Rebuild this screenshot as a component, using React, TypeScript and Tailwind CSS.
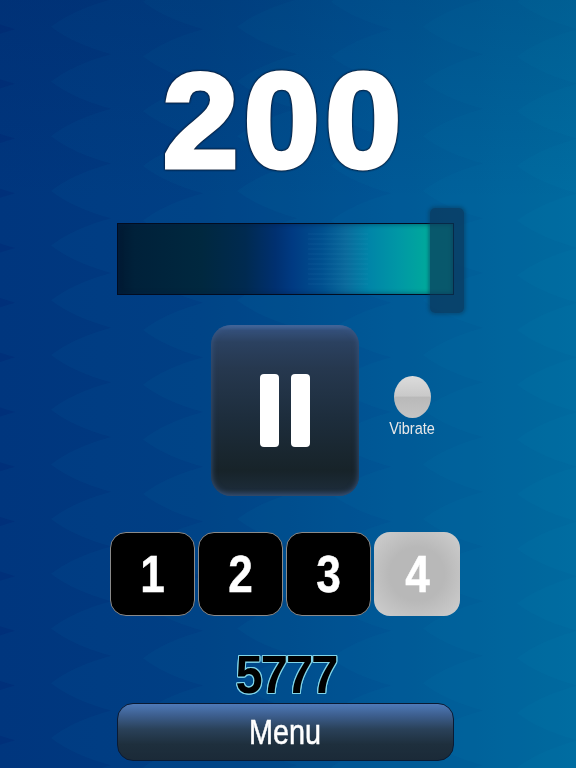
const PERIOD = 54.7;

function boundary(leftX: number, leftY: number) {
  // region to the right of a scalloped zig-zag edge; left tips at (leftX, leftY + k*PERIOD)
  const half = PERIOD / 2;
  const w = 60;
  let y = leftY % PERIOD;
  y -= PERIOD * 2;
  let d = `M700 ${y - half} L${leftX + w} ${y - half}`;
  while (y < 820) {
    d += ` Q${leftX + 22} ${y - 17} ${leftX} ${y}`;
    d += ` Q${leftX + 22} ${y + 17} ${leftX + w} ${y + half}`;
    y += PERIOD;
  }
  d += ` L700 ${y - half} Z`;
  return d;
}

const EDGES: [number, number][] = [
  [-45, 330],
  [51, 355],
  [143, 330],
  [237, 355],
  [331, 330],
  [423, 355],
  [517, 330],
];

export default function App() {
  return (
    <div className="relative w-[576px] h-[768px] overflow-hidden bg-[linear-gradient(90deg,#00307a_0%,#00347c_35%,#004288_65%,#005692_100%)] [font-family:'Liberation_Sans',Arial,sans-serif]">
      <svg className="absolute inset-0" width="576" height="768">
        {EDGES.map(([x, y]) => (
          <path key={x} d={boundary(x, y)} fill="#00a0c8" fillOpacity="0.055" />
        ))}
      </svg>
      <div className="absolute inset-x-0 top-0 h-[200px] bg-[linear-gradient(180deg,rgba(0,25,80,0.16),rgba(0,25,80,0))]" />

      <div className="relative flex flex-col items-center h-full">
        <div className="h-[223px] w-full flex justify-center pt-[65px]">
          <div className="ml-[-7px] text-[140px] leading-[111px] h-[111px] font-bold text-white tracking-[6px] scale-x-[.97] scale-y-[.96] [-webkit-text-stroke:5px_#ffffff] [filter:drop-shadow(0_0_1px_#06152e)_drop-shadow(0_0_0.5px_#06152e)]">
            200
          </div>
        </div>

        <div className="relative ml-[-5px] w-[337px] h-[72px] border-[1.5px] border-[#020c20] bg-[linear-gradient(90deg,#001a33_0%,#00213a_5%,#00283f_25%,#002a50_38%,#003070_47%,#003a82_52%,#00508f_61%,#0a6a9c_68%,#0085a8_75%,#0098a5_84%,#00a89c_92%,#00aa9a_100%)]">
          <div className="absolute inset-0 shadow-[inset_0_0_5px_rgba(0,30,70,0.6)]" />
          <div className="absolute left-[190px] w-[60px] top-[6px] bottom-[6px] bg-[repeating-linear-gradient(180deg,rgba(255,255,255,0)_0px,rgba(255,255,255,0)_3px,rgba(120,200,240,0.035)_3px,rgba(120,200,240,0.035)_5px)]" />
          <div className="absolute left-[312px] top-[-16px] w-[34px] h-[105px] rounded-[5px] bg-[#0b3658]/70 shadow-[0_0_3px_2px_rgba(11,54,88,0.4)]" />
        </div>

        <div className="mt-[30px] flex w-full h-[171px]">
          <div className="ml-[211px] w-[148px] h-[171px] rounded-[20px] flex items-center justify-center gap-[12px] bg-[linear-gradient(180deg,#4a6fa8_0%,#34507a_3%,#2b4160_10%,#26384f_25%,#1d2d3c_55%,#172329_85%,#1c2b38_96%,#2a3d55_100%)] shadow-[inset_0_0_6px_#3c5a88]">
            <div className="w-[19px] h-[73px] rounded-[4px] bg-white" />
            <div className="w-[19px] h-[73px] rounded-[4px] bg-white" />
          </div>
          <div className="ml-[29px] flex flex-col items-center mt-[51px] w-[48px]">
            <div className="w-[37px] h-[42px] rounded-[50%] bg-[linear-gradient(180deg,#dcdcdc_0%,#c9c9c9_48%,#b9b9b9_50%,#c4c4c4_100%)]" />
            <div className="text-[14.5px] leading-[16px] mt-[2px] text-[#e8e8e8] whitespace-nowrap scale-y-110">Vibrate</div>
          </div>
        </div>

        <div className="mt-[36px] flex gap-[3px] ml-[-6px]">
          {["1", "2", "3"].map((n) => (
            <div key={n} className="w-[85px] h-[84px] rounded-[16px] bg-black border border-[#8a8a8a] flex items-center justify-center text-white text-[52px] font-bold">
              <span className="scale-x-[.85] [-webkit-text-stroke:0.5px_#ffffff]">{n}</span>
            </div>
          ))}
          <div className="w-[86px] h-[84px] rounded-[16px] bg-[radial-gradient(ellipse_at_center,#b8b8b8_45%,#cfcfcf_100%)] flex items-center justify-center text-white text-[52px] font-bold">
            <span className="scale-x-[.85] [-webkit-text-stroke:0.5px_#ffffff]">4</span>
          </div>
        </div>

        <div className="mt-[35px] h-[47px] ml-[-5px] text-[53px] leading-[47px] font-bold text-black tracking-[-2px] scale-x-[.92] [filter:drop-shadow(1px_0_0_#7fd4e8)_drop-shadow(-1px_0_0_#7fd4e8)_drop-shadow(0_1px_0_#7fd4e8)_drop-shadow(0_-1px_0_#7fd4e8)]">
          5777
        </div>

        <div className="mt-[5px] ml-[-5px] w-[337px] h-[58px] rounded-[16px] border border-[#0a1a33] flex items-center justify-center text-white text-[32px] bg-[linear-gradient(180deg,#4f7ab8_0%,#3d5f8f_20%,#2a4159_45%,#1e2f3d_72%,#1b2a38_100%)]">
          <span className="scale-x-[.9] scale-y-110 [-webkit-text-stroke:0.5px_#ffffff]">Menu</span>
        </div>
      </div>
    </div>
  );
}
